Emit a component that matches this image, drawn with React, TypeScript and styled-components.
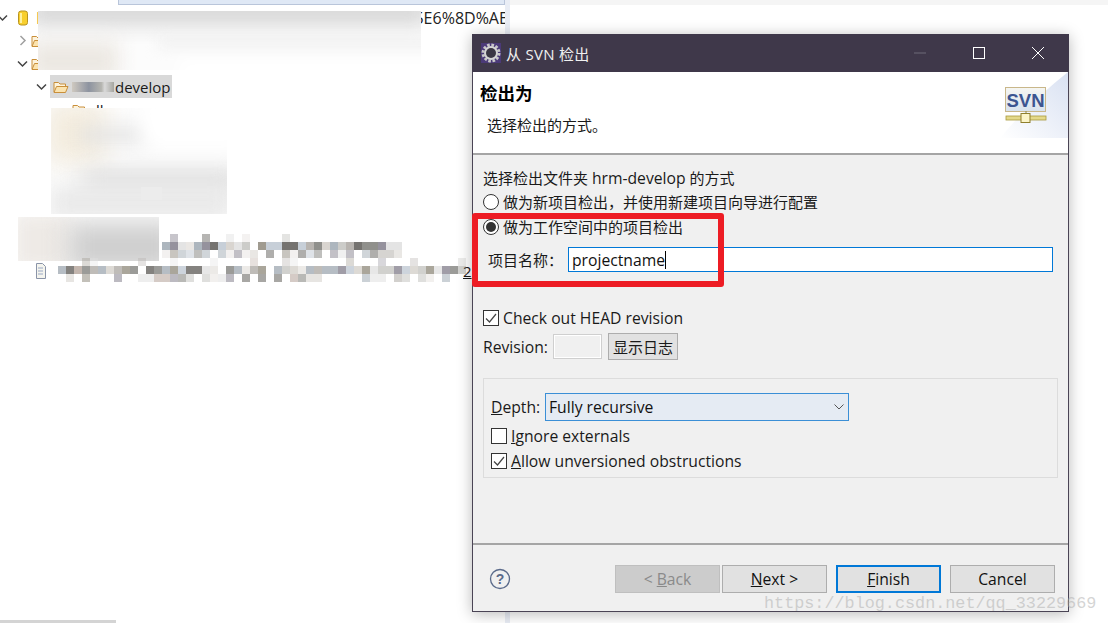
import React from 'react';
import styled, { createGlobalStyle } from 'styled-components';

const Global = createGlobalStyle`
  html, body { margin: 0; padding: 0; background: #fff; }
  * { box-sizing: border-box; }
`;
const UI = `"Open Sans", "Noto Sans CJK SC", sans-serif`;

const Desktop = styled.div`
  position: relative; width: 1108px; height: 623px; overflow: hidden; display: flex;
  font-family: ${UI}; font-size: 15px; color: #1a1a1a; background: #fff;
`;
const Latin = styled.span`font-size: 15.7px;`;
const LeftPane = styled.div`width: 505px; height: 100%; display: flex; flex-direction: column; background: #fff; position: relative; overflow: hidden;`;
const Divider = styled.div`width: 5px; height: 100%; background: #e9edf5;`;
const RightPane = styled.div`flex: 1; display: flex; flex-direction: column;`;
const RightTop = styled.div`height: 5px; background: #f5f5f5;`;
const TopTab = styled.div`margin-left: 118px; height: 5px; background: #dfe8f5; border: 1px solid #b9c5da; border-top: 0; flex: none;`;
const HScroll = styled.div`position: absolute; left: 0; bottom: 0; width: 116px; height: 3px; background: #d4d4d4;`;
const Tree = styled.div`display: flex; flex-direction: column; padding-top: 1px;`;
const Row = styled.div<{ $indent: number }>`
  height: 23px; display: flex; align-items: center; gap: 3px; margin-left: ${p => p.$indent}px;
  font-size: 15px; white-space: nowrap;
  & > svg { flex: none; }
`;
const Selected = styled.span`display: inline-flex; align-items: center; gap: 3px; height: 23px; width: 122px; background: #d9d9d9; padding: 0 0 0 3px; & > svg { flex: none; }`;
const Smudge = styled.span`width: 42px; height: 10px; flex: none; background: linear-gradient(90deg,#cfc9c0,#8d93a0 40%,#b5b5b0 70%,#d9d9d9 78%,#a5a5a0); margin-right: -2px;`;
const RepoSlot = styled.span`margin-left: 7px; display: flex; flex: none;`;
const RepoGlyph = styled.span`color: #d98a1a; margin-left: 5px; font-size: 16px; flex: none;`;
const RepoText = styled.span`margin-left: 371px; color: #222; font-size: 16px; flex: none;`;
const FolderText = styled.span`margin-left: 5px; font-size: 15px;`;

const BlurPatch = styled.div<{ $l: number; $t: number; $w: number; $h: number }>`
  position: absolute; left: ${p => p.$l}px; top: ${p => p.$t}px; width: ${p => p.$w}px; height: ${p => p.$h}px;
  overflow: hidden; background: #fcfcfc;
`;
const Blob = styled.div<{ $l: number; $t: number; $w: number; $h: number; $c: string; $b: number }>`
  position: absolute; left: ${p => p.$l}px; top: ${p => p.$t}px; width: ${p => p.$w}px; height: ${p => p.$h}px;
  background: ${p => p.$c}; filter: blur(${p => p.$b}px);
`;
const MosaicSvg = styled.svg`position: absolute; left: 34px; top: 234px;`;
const DocIcon = styled.svg`position: absolute; left: 36px; top: 263px;`;
const QMark = styled.span`position: absolute; left: 463px; top: 261px; font-size: 15px; text-decoration: underline;`;

const Dialog = styled.div`
  position: absolute; left: 472px; top: 34px; width: 597px; height: 578px; display: flex; flex-direction: column;
  background: #f0f0f0; border: 1px solid #4a4455; border-top: 0;
  box-shadow: 0 2px 14px rgba(0,0,0,.28);
`;
const TitleBar = styled.div`height: 38px; flex: none; background: #3f384a; display: flex; align-items: center; padding: 0 2px 0 9px; color: #f0f0f0; font-size: 15px; gap: 5px; margin: 0 -1px;`;
const TitleText = styled.span`flex: 1; letter-spacing: .3px;`;
const WinButton = styled.div`width: 59px; height: 38px; margin-left: -5px; display: flex; align-items: center; justify-content: center;`;
const Header = styled.div`position: relative; height: 83px; flex: none; background: #fff; border-bottom: 2px solid #a5a5a5; padding: 10px 0 0 7px;`;
const HeaderTitle = styled.div`font-size: 17.5px; font-weight: 700; color: #000; line-height: 22px;`;
const HeaderSub = styled.div`margin: 10px 0 0 7px; font-size: 15px; line-height: 22px;`;
const HeaderArt = styled.svg`position: absolute; right: 0; top: 0;`;

const Body = styled.div`flex: 1; display: flex; flex-direction: column; padding: 12px 11px 0 10px;`;
const Line = styled.div`height: 22px; line-height: 22px; white-space: nowrap;`;
const RadioRow = styled.label`height: 25px; display: flex; align-items: center; gap: 4px; white-space: nowrap;`;
const RadioCircle = styled.span<{ $on?: boolean }>`
  width: 16px; height: 16px; border-radius: 50%; border: 1px solid #333; background: #fff;
  display: flex; align-items: center; justify-content: center; flex: none;
  &::after { content: ''; width: 10px; height: 10px; border-radius: 50%; background: ${p => p.$on ? '#333' : 'transparent'}; }
`;
const NameRow = styled.div`margin-top: 8px; display: flex; align-items: center; height: 25px; padding-left: 5px;`;
const NameLabel = styled.span`width: 80px; flex: none; white-space: nowrap;`;
const NameInput = styled.div`
  width: 485px; height: 25px; border: 1px solid #0078d7; background: #fff; display: flex; align-items: center;
  padding-left: 3px; font-size: 15.7px; color: #111;
`;
const Caret = styled.span`display: inline-block; width: 1px; height: 18px; background: #000;`;
const CheckRow = styled.label<{ $top?: number }>`height: 25px; margin-top: ${p => p.$top ?? 0}px; display: flex; align-items: center; gap: 4px; white-space: nowrap; font-size: 15.7px;`;
const CheckFrame = styled.span`width: 16px; height: 16px; border: 1px solid #333; background: #fff; flex: none; display: flex; align-items: center; justify-content: center;`;
const RevisionRow = styled.div`height: 27px; margin-top: 3px; display: flex; align-items: center;`;
const RevLabel = styled.span`width: 70px; flex: none; font-size: 15.7px;`;
const RevInput = styled.div`width: 49px; height: 25px; background: #f0f0f0; border: 1px solid #cfcfcf; box-shadow: inset 0 0 0 1px #fff; flex: none;`;
const LogButton = styled.div`margin-left: 6px; width: 70px; height: 27px; background: #e1e1e1; border: 1px solid #adadad; display: flex; align-items: center; justify-content: center;`;
const Group = styled.div`margin-top: 18px; width: 575px; height: 100px; border: 1px solid #dcdcdc; padding: 14px 0 0 7px; display: flex; flex-direction: column;`;
const DepthRow = styled.div`display: flex; align-items: center; height: 28px; margin-bottom: 2px;`;
const DepthLabel = styled.span`width: 54px; flex: none; font-size: 15.7px;`;
const Under = styled.span`text-decoration: underline;`;
const Select = styled.div`
  width: 304px; height: 28px; background: #e5ebf3; border: 1px solid #3b8fd6; display: flex; align-items: center;
  justify-content: space-between; padding: 0 3px 0 3px; color: #111; font-size: 15.7px;
`;
const Spacer = styled.div`flex: 1;`;
const Footer = styled.div`height: 68px; flex: none; border-top: 2px solid #a5a5a5; position: relative; display: flex; align-items: center; padding: 2px 13px 0 16px;`;
const HelpIcon = styled.svg`flex: none;`;
const Buttons = styled.div`margin-left: auto; display: flex; align-items: center;`;
const FootButton = styled.div<{ $disabled?: boolean; $default?: boolean; $gap?: number }>`
  width: 105px; height: 28px; margin-left: ${p => p.$gap ?? 0}px; display: flex; align-items: center; justify-content: center;
  font-size: 15.7px; white-space: pre;
  background: ${p => p.$disabled ? '#cccccc' : '#e1e1e1'}; color: ${p => p.$disabled ? '#8a8a8a' : '#111'};
  border: ${p => p.$default ? '2px solid #0078d7' : p.$disabled ? '1px solid #bfbfbf' : '1px solid #adadad'};
`;
const RedBox = styled.div`position: absolute; left: 472px; top: 213px; width: 252px; height: 74px; border: 6px solid #ed1c24; border-radius: 3px; pointer-events: none;`;
const Watermark = styled.div`position: absolute; left: 764px; top: 594px; font-family: "Liberation Mono", monospace; font-size: 16.8px; color: rgba(170,170,170,.5); white-space: nowrap;`;

const Chevron = ({ open }: { open: boolean }) => (
  <svg width="11" height="11" viewBox="0 0 11 11" fill="none" stroke={open ? '#444' : '#a0a0a0'} strokeWidth="1.5">
    <path d={open ? 'M1 3.5 5.5 8 10 3.5' : 'M3.5 1 8 5.5 3.5 10'} />
  </svg>
);
const Folder = () => (
  <svg width="16" height="14" viewBox="0 0 16 14">
    <path d="M1 12V2.5h4.5l1.5 1.5h5.5v2" fill="#fdf3dc" stroke="#c98f3a" />
    <path d="M1 12.5 3.5 6.5h11.5l-2.5 6z" fill="#fbe3ae" stroke="#c98f3a" />
  </svg>
);
const Repo = () => (
  <svg width="10" height="16" viewBox="0 0 10 16">
    <rect x=".5" y="1" width="9" height="14" rx="2.5" fill="#f8cf2e" stroke="#b89420" />
    <rect x="2" y="3" width="2" height="10" fill="#fdf0a0" />
  </svg>
);

const Gear = () => (
  <svg width="20" height="20" viewBox="0 0 20 20">
    <rect width="20" height="20" fill="#4b3a78" />
    <circle cx="10" cy="10" r="8" fill="none" stroke="#c8c8c8" strokeWidth="3" strokeDasharray="2.6 1.6" />
    <circle cx="10" cy="10" r="7" fill="#d4d4d4" />
    <circle cx="10" cy="10" r="5" fill="#3a3644" />
  </svg>
);

const Check = () => (
  <svg width="12" height="12" viewBox="0 0 12 12" fill="none" stroke="#444" strokeWidth="1.2">
    <path d="M1 6.5 4.5 10 11 2" />
  </svg>
);

function mosaic() {
  const palette = ['#8a8a86', '#b4b0ac', '#c9c9c6', '#a9b2ba', '#8f8c98', '#d7d3ce', '#b9a9a0', '#9b968a', '#e3e3e3', '#c4ccd6', '#e9e6e3', '#6e6c68'];
  const rects: React.ReactNode[] = [];
  let seed = 17;
  const rnd = () => { seed = (seed * 9301 + 49297) % 233280; return seed / 233280; };
  const rows = [
    { y: 0, p: 0.15, from: 16, to: 46, o: 0.5 },
    { y: 8, p: 0.97, from: 16, to: 46, o: 0.95 },
    { y: 16, p: 0.8, from: 16, to: 46, o: 0.55 },
    { y: 24, p: 0.2, from: 3, to: 54, o: 0.35 },
    { y: 32, p: 0.92, from: 3, to: 54, o: 0.85 },
    { y: 40, p: 0.65, from: 1, to: 54, o: 0.6 },
  ];
  rows.forEach(r => {
    for (let i = r.from; i < r.to; i++) {
      const v = rnd();
      const c = palette[Math.floor(rnd() * palette.length)];
      if (v < r.p) rects.push(<rect key={`${r.y}-${i}`} x={i * 8} y={r.y} width="8" height="8" fill={c} opacity={r.o} />);
    }
  });
  return rects;
}

export default function App() {
  return (
    <Desktop>
      <Global />
      <LeftPane>
        <TopTab />
        <Tree>
          <Row $indent={-3}><Chevron open /><RepoSlot><Repo /></RepoSlot><RepoGlyph>I</RepoGlyph><RepoText>5E6%8D%AE</RepoText></Row>
          <Row $indent={17}><Chevron open={false} /><Folder /></Row>
          <Row $indent={17}><Chevron open /><Folder /></Row>
          <Row $indent={36}><Chevron open /><Selected><Folder /><Smudge />develop</Selected></Row>
          <Row $indent={72}><Folder /><FolderText>ll</FolderText></Row>
        </Tree>
        <BlurPatch $l={38} $t={11} $w={383} $h={59}>
          <Blob $l={-10} $t={-14} $w={400} $h={28} $c="#d6d6d6" $b={10} />
          <Blob $l={-10} $t={30} $w={90} $h={40} $c="#ece8e2" $b={10} />
          <Blob $l={120} $t={28} $w={280} $h={8} $c="#ededed" $b={7} />
          <Blob $l={140} $t={48} $w={280} $h={30} $c="#ffffff" $b={8} />
        </BlurPatch>
        <BlurPatch $l={51} $t={108} $w={176} $h={106}>
          <Blob $l={-5} $t={-5} $w={60} $h={60} $c="#f3ecde" $b={12} />
          <Blob $l={30} $t={20} $w={70} $h={14} $c="#e2e2e2" $b={9} />
          <Blob $l={30} $t={62} $w={160} $h={22} $c="#dcdcdc" $b={11} />
          <Blob $l={0} $t={78} $w={180} $h={34} $c="#e9e9e9" $b={10} />
          <Blob $l={90} $t={-10} $w={100} $h={50} $c="#ffffff" $b={10} />
          <Blob $l={90} $t={79} $w={21} $h={13} $c="#ececec" $b={0} />
        </BlurPatch>
        <BlurPatch $l={18} $t={217} $w={141} $h={44}>
          <Blob $l={-5} $t={-5} $w={60} $h={60} $c="#eeeae6" $b={10} />
          <Blob $l={50} $t={5} $w={110} $h={50} $c="#cfcfcf" $b={12} />
        </BlurPatch>
        <MosaicSvg width="440" height="48" viewBox="0 0 440 48">{mosaic()}</MosaicSvg>
        <DocIcon width="10" height="16" viewBox="0 0 10 16"><path d="M.5.5h6l3 3v12H.5z" fill="#f4f4ee" stroke="#8a94a8" /><path d="M2 5h5M2 8h5M2 11h5" stroke="#9aa8c4" /></DocIcon>
        <QMark>2</QMark>
        <HScroll />
      </LeftPane>
      <Divider />
      <RightPane><RightTop /></RightPane>

      <Dialog>
        <TitleBar>
          <Gear />
          <TitleText>从 SVN 检出</TitleText>
          <WinButton><svg width="14" height="14" viewBox="0 0 14 14"><path d="M1 7h12" stroke="#6f6a78" /></svg></WinButton>
          <WinButton><svg width="14" height="14" viewBox="0 0 14 14" fill="none"><rect x="1.5" y="1.5" width="11" height="11" stroke="#fff" /></svg></WinButton>
          <WinButton><svg width="14" height="14" viewBox="0 0 14 14"><path d="M1 1l12 12M13 1 1 13" stroke="#fff" /></svg></WinButton>
        </TitleBar>
        <Header>
          <HeaderTitle>检出为</HeaderTitle>
          <HeaderSub>选择检出的方式。</HeaderSub>
          <HeaderArt width="68" height="66" viewBox="0 0 68 66">
            <defs>
              <linearGradient id="art" x1="0" y1="1" x2="1" y2="0">
                <stop offset="0" stopColor="#ffffff" />
                <stop offset="1" stopColor="#d9e1f2" />
              </linearGradient>
              <linearGradient id="svn" x1="0" y1="0" x2="0" y2="1">
                <stop offset="0" stopColor="#f6f6f2" />
                <stop offset="1" stopColor="#d7e2ee" />
              </linearGradient>
            </defs>
            <path d="M0 66 Q30 30 68 0V66z" fill="url(#art)" />
            <rect x="5.5" y="15.5" width="40" height="24" fill="url(#svn)" stroke="#c9b78a" />
            <text x="25.5" y="35" textAnchor="middle" fontFamily="'Liberation Sans', sans-serif" fontWeight="700" fontSize="18.5" fill="#3c5590">SVN</text>
            <path d="M26 39v5" stroke="#8f8a4a" />
            <rect x="6" y="44" width="40" height="4" fill="#e4d98a" stroke="#a99a3e" strokeWidth=".8" />
            <rect x="21" y="41.5" width="9" height="9" fill="#fbf4c8" stroke="#8f7f2c" />
          </HeaderArt>
        </Header>
        <Body>
          <Line>选择检出文件夹 <Latin>hrm-develop</Latin> 的方式</Line>
          <RadioRow><RadioCircle />做为新项目检出，并使用新建项目向导进行配置</RadioRow>
          <RadioRow><RadioCircle $on />做为工作空间中的项目检出</RadioRow>
          <NameRow>
            <NameLabel>项目名称：</NameLabel>
            <NameInput>projectname<Caret /></NameInput>
          </NameRow>
          <CheckRow $top={33}><CheckFrame><Check /></CheckFrame>Check out HEAD revision</CheckRow>
          <RevisionRow>
            <RevLabel>Revision:</RevLabel>
            <RevInput />
            <LogButton>显示日志</LogButton>
          </RevisionRow>
          <Group>
            <DepthRow>
              <DepthLabel><Under>D</Under>epth:</DepthLabel>
              <Select>Fully recursive
                <svg width="12" height="8" viewBox="0 0 12 8" fill="none" stroke="#555"><path d="M1.5 1.5 6 6l4.5-4.5" /></svg>
              </Select>
            </DepthRow>
            <CheckRow><CheckFrame /><span><Under>I</Under>gnore externals</span></CheckRow>
            <CheckRow><CheckFrame><Check /></CheckFrame><span><Under>A</Under>llow unversioned obstructions</span></CheckRow>
          </Group>
          <Spacer />
        </Body>
        <Footer>
          <HelpIcon width="22" height="22" viewBox="0 0 22 22" fill="none">
            <circle cx="11" cy="11" r="9.5" stroke="#5a6a8a" strokeWidth="1.3" />
            <text x="11" y="16" textAnchor="middle" fontFamily="'Liberation Sans', sans-serif" fontWeight="700" fontSize="14" fill="#5a6a8a">?</text>
          </HelpIcon>
          <Buttons>
            <FootButton $disabled>{'< '}<Under>B</Under>ack</FootButton>
            <FootButton $gap={2}><Under>N</Under>ext &gt;</FootButton>
            <FootButton $gap={9} $default><Under>F</Under>inish</FootButton>
            <FootButton $gap={9}>Cancel</FootButton>
          </Buttons>
        </Footer>
      </Dialog>
      <RedBox />
      <Watermark>https://blog.csdn.net/qq_33229669</Watermark>
    </Desktop>
  );
}
